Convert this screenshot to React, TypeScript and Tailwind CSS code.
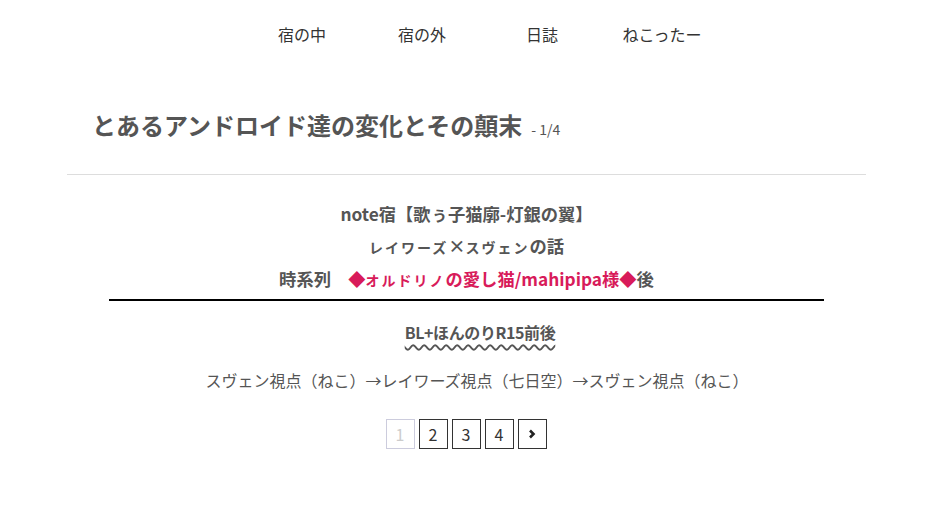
import React from "react";

export default function App() {
  const font = "font-['Noto_Sans_CJK_JP','Noto_Sans',sans-serif]";
  const small = "text-[14px] tracking-[2px]";
  return (
    <div className={`w-[942px] h-[508px] bg-white text-[#555] ${font}`}>
      <nav className="flex pt-[24px] ml-[242px] text-[16px] leading-[20px] text-[#333]">
        <a className="w-[120px] text-center">宿の中</a>
        <a className="w-[120px] text-center">宿の外</a>
        <a className="w-[120px] text-center">日誌</a>
        <a className="w-[120px] text-center">ねこったー</a>
      </nav>
      <main className="ml-[67px] w-[799px]">
        <div className="flex items-baseline pl-[25px] mt-[64px] h-[34px]">
          <h1 className="text-[24px] leading-[34px] font-bold text-[#555]">とあるアンドロイド達の変化とその顛末</h1>
          <span className="ml-[9px] text-[14px] text-[#555]">- 1/4</span>
        </div>
        <div className="mt-[32px] h-px bg-[#ddd]" />
        <div className="text-center font-bold">
          <p className="mt-[23px] text-[17.3px] leading-[32px]">note宿【歌ぅ子猫廓-灯銀の翼】</p>
          <p className="text-[17.3px] leading-[32px]">
            <span className={small}>レイワーズ</span>×<span className={small}>スヴェン</span>の話
          </p>
          <p className="text-[17.3px] leading-[32px]">
            時系列　<span className="text-[#d81b5a]">◆<span className={small}>オルドリノ</span>の愛し猫/mahipipa様◆</span>後
          </p>
        </div>
        <div className="mx-[42px] mt-[3px] h-[2px] bg-black" />
        <p className="mt-[19px] pl-[27px] text-center text-[16px] leading-[24px] font-bold">
          <span className="underline decoration-wavy decoration-[#555] underline-offset-[5px] decoration-[1.5px] tracking-[-0.4px]">BL+ほんのりR15前後</span>
        </p>
        <p className="mt-[24px] pl-[21px] text-center text-[16px] leading-[24px]">
          スヴェン視点（ねこ）→レイワーズ視点（七日空）→スヴェン視点（ねこ）
        </p>
        <div className="mt-[27px] flex justify-center gap-[4px] text-[16px] pr-[1px]">
          <span className="w-[29px] h-[30px] border border-[#ccd] text-[#ccc] flex items-center justify-center">1</span>
          <span className="w-[29px] h-[30px] border border-[#333] text-[#333] flex items-center justify-center">2</span>
          <span className="w-[29px] h-[30px] border border-[#333] text-[#333] flex items-center justify-center">3</span>
          <span className="w-[29px] h-[30px] border border-[#333] text-[#333] flex items-center justify-center">4</span>
          <span className="w-[29px] h-[30px] border border-[#333] text-[#333] flex items-center justify-center">
            <svg width="8" height="10" viewBox="0 0 8 10"><path d="M2 1.5 L5.5 5 L2 8.5" fill="none" stroke="#222" strokeWidth="2.6" /></svg>
          </span>
        </div>
      </main>
    </div>
  );
}
